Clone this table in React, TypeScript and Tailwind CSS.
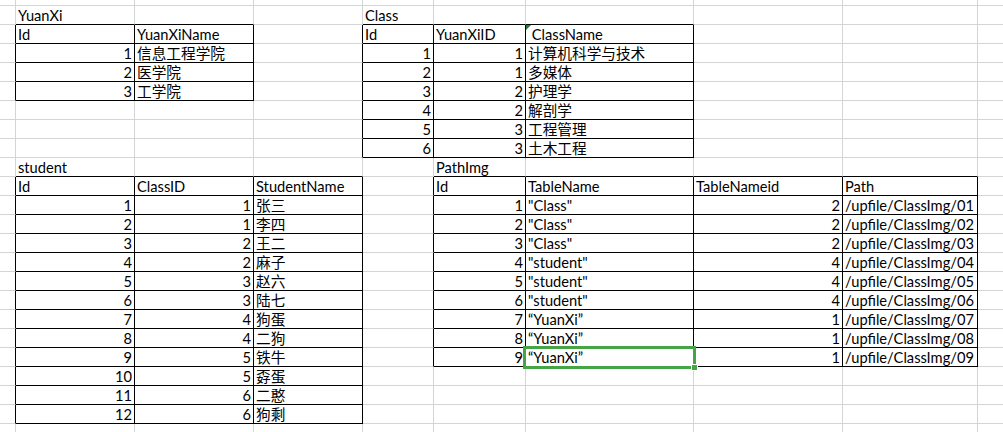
import type { ReactNode } from "react";

type Cell = { t: string; right?: boolean };
type Table = { r0: number; r1: number; c0: number; c1: number };

const ROWS = 24;
const COLS = 10;

const cells: Record<string, Cell> = {};
const tables: Table[] = [];

function put(r: number, c: number, t: string, right = false) {
  cells[`${r}-${c}`] = { t, right };
}

function addTable(
  label: string,
  r: number,
  c: number,
  header: string[],
  rows: (string | number)[][],
) {
  put(r, c, label);
  header.forEach((h, i) => put(r + 1, c + i, h));
  rows.forEach((row, ri) =>
    row.forEach((v, ci) => put(r + 2 + ri, c + ci, String(v), typeof v === "number")),
  );
  tables.push({ r0: r + 1, r1: r + 1 + rows.length, c0: c, c1: c + header.length - 1 });
}

addTable("YuanXi", 1, 1, ["Id", "YuanXiName"], [
  [1, "信息工程学院"],
  [2, "医学院"],
  [3, "工学院"],
]);

addTable("Class", 1, 4, ["Id", "YuanXiID", " ClassName"], [
  [1, 1, "计算机科学与技术"],
  [2, 1, "多媒体"],
  [3, 2, "护理学"],
  [4, 2, "解剖学"],
  [5, 3, "工程管理"],
  [6, 3, "土木工程"],
]);

addTable("student", 9, 1, ["Id", "ClassID", "StudentName"], [
  [1, 1, "张三"],
  [2, 1, "李四"],
  [3, 2, "王二"],
  [4, 2, "麻子"],
  [5, 3, "赵六"],
  [6, 3, "陆七"],
  [7, 4, "狗蛋"],
  [8, 4, "二狗"],
  [9, 5, "铁牛"],
  [10, 5, "孬蛋"],
  [11, 6, "二憨"],
  [12, 6, "狗剩"],
]);

addTable("PathImg", 9, 5, ["Id", "TableName", "TableNameid", "Path"], [
  [1, "\"Class\"", 2, "/upfile/ClassImg/01"],
  [2, "\"Class\"", 2, "/upfile/ClassImg/02"],
  [3, "\"Class\"", 2, "/upfile/ClassImg/03"],
  [4, "\"student\"", 4, "/upfile/ClassImg/04"],
  [5, "\"student\"", 4, "/upfile/ClassImg/05"],
  [6, "\"student\"", 4, "/upfile/ClassImg/06"],
  [7, "“YuanXi”", 1, "/upfile/ClassImg/07"],
  [8, "“YuanXi”", 1, "/upfile/ClassImg/08"],
  [9, "“YuanXi”", 1, "/upfile/ClassImg/09"],
]);

function inTable(r: number, c: number) {
  return tables.some((t) => r >= t.r0 && r <= t.r1 && c >= t.c0 && c <= t.c1);
}

const SELECTED = "19-6";
const NOTE = "2-6";

export default function App() {
  const out: ReactNode[] = [];
  for (let r = 0; r < ROWS; r++) {
    for (let c = 0; c < COLS; c++) {
      const key = `${r}-${c}`;
      const cell = cells[key];
      const blackR = inTable(r, c) || inTable(r, c + 1);
      const blackB = inTable(r, c) || inTable(r + 1, c);
      out.push(
        <div
          key={key}
          className={[
            "relative flex items-end border-r border-b px-[2px] whitespace-pre",
            blackR ? "border-r-black" : "border-r-[#d4d4d4]",
            blackB ? "border-b-black" : "border-b-[#d4d4d4]",
            cell?.right ? "justify-end" : "justify-start",
          ].join(" ")}
        >
          {cell && <span className="leading-[16px]">{cell.t}</span>}
          {key === NOTE && (
            <svg className="absolute left-0 top-0" width="5" height="5" viewBox="0 0 5 5">
              <polygon points="0,0 5,0 0,5" fill="#1e7e34" />
            </svg>
          )}
          {key === SELECTED && (
            <div className="absolute -left-[3px] -top-[2px] z-10 h-[23px] w-[173px] border-[3px] border-[#45a545]">
              <div className="absolute -bottom-[5px] -right-[5px] h-[7px] w-[7px] border border-white bg-[#45a545]" />
            </div>
          )}
        </div>,
      );
    }
  }

  return (
    <div className="h-[432px] w-[1003px] overflow-hidden bg-white font-['Lato','Noto_Sans_CJK_SC',sans-serif] text-[14.67px] text-black">
      <div className="grid grid-cols-[16px_119px_119px_109px_71px_92px_168px_149px_135px_60px] grid-rows-[6px_repeat(23,19px)]">
        {out}
      </div>
    </div>
  );
}
